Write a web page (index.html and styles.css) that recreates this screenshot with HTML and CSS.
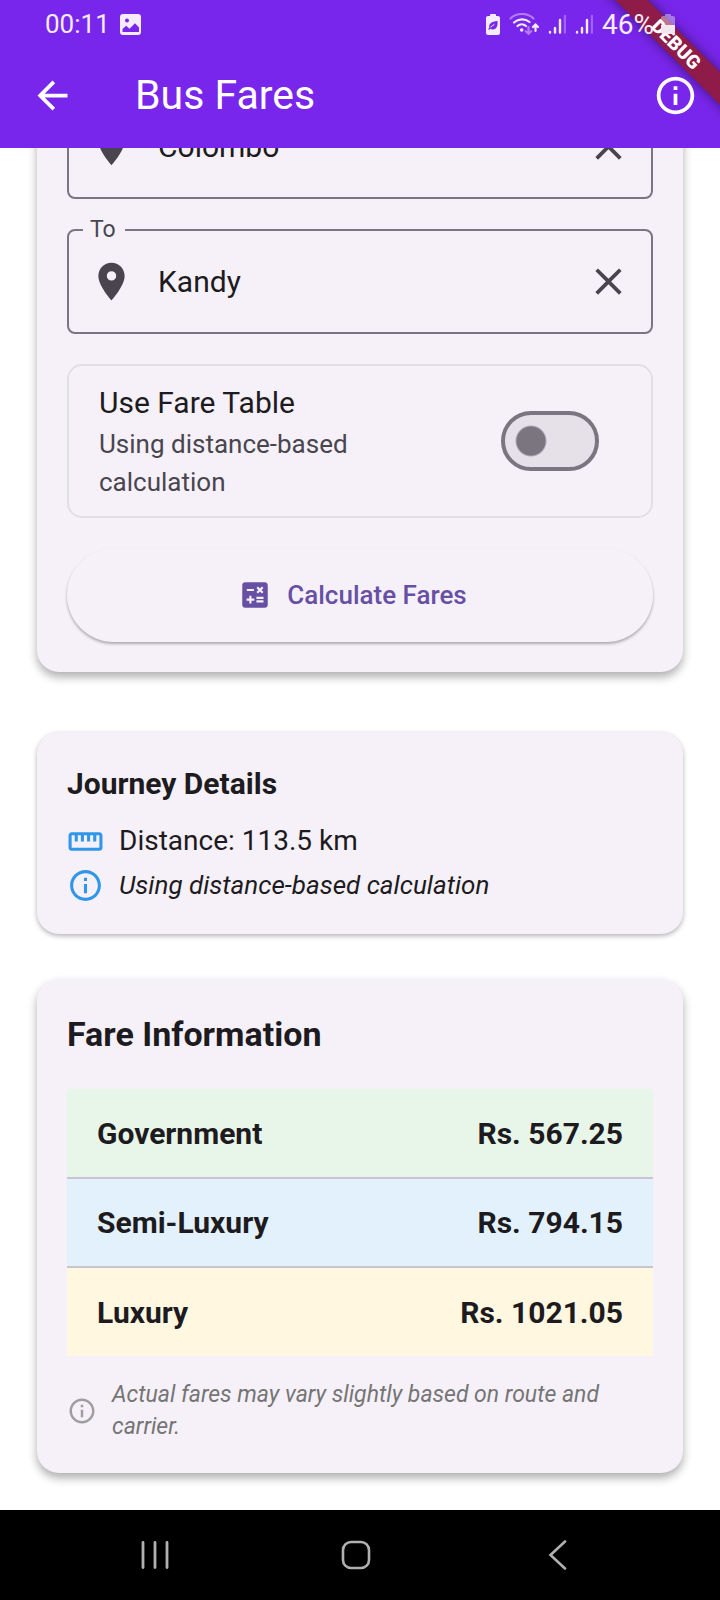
FILE: index.html
```html
<!DOCTYPE html>
<html lang="en">
<head>
<meta charset="utf-8">
<meta name="viewport" content="width=device-width, initial-scale=1">
<title>Bus Fares</title>
<link rel="stylesheet" href="styles.css">
</head>
<body>
<div class="app">
  <header class="header">
    <div class="debug-banner">DEBUG</div>
    <div class="status">
      <span class="status-time">00:11</span>
      <svg class="status-photo" viewBox="0 0 21 21" width="21" height="21"><path fill="#f4ecfe" fill-rule="evenodd" d="M3 0h15a3 3 0 0 1 3 3v15a3 3 0 0 1-3 3H3a3 3 0 0 1-3-3V3a3 3 0 0 1 3-3zM7 4.500a2 2 0 1 0 0 4 2 2 0 0 0 0-4zM2.500 15v3h16.500v-4.500L15 9.300l-5.500 5.500-3.300-3z"/></svg>
      <div class="status-right">
        <svg viewBox="0 0 14 21" width="14" height="21"><path fill="#f4ecfe" d="M4 2V1a1 1 0 0 1 1-1h4a1 1 0 0 1 1 1v1h2a2 2 0 0 1 2 2v15a2 2 0 0 1-2 2H2a2 2 0 0 1-2-2V4a2 2 0 0 1 2-2z"/><path fill="#7826eb" d="M11.500 7c.6 4.500-1 8.500-4.500 8.500-1.200 0-2-.3-2.700-.8L3 16l-.8-1 1.200-1.200C2.300 10 5.500 7.500 11.500 7z"/><path d="M4.500 13.200l4-3" stroke="#f4ecfe" stroke-width="1"/></svg>
        <svg class="status-wifi" viewBox="0 0 30 22" width="30" height="22" fill="none" stroke-width="2.200" stroke-linecap="round"><path stroke="#b27cf7" d="M1.500 5.500C8-.5 18-.5 24.500 5.500M19.500 14v6.500M16.800 18.200l2.700 2.600 2.700-2.600"/><path stroke="#f4ecfe" d="M5 9.500C9.500 5.500 16 5.500 20.500 9M8.500 13c2.500-2.200 6-2.200 8.500 0M26.500 18v-6M24 14l2.500-2.500L29 14"/><circle cx="12.700" cy="17" r="1.800" fill="#f4ecfe"/></svg>
        <svg viewBox="0 0 18 20" width="18" height="20" stroke-width="2.400" stroke-linecap="round"><path stroke="#f4ecfe" d="M2 18v.5M7 14v4.500M12 6v12.500"/><path stroke="#a463f6" d="M17 2v16.500"/></svg>
        <svg viewBox="0 0 18 20" width="18" height="20" stroke-width="2.400" stroke-linecap="round"><path stroke="#f4ecfe" d="M2 18v.5M7 14v4.500M12 6v12.500"/><path stroke="#a463f6" d="M17 2v16.500"/></svg>
        <span class="status-percent">46%</span>
        <svg class="status-battery" viewBox="0 0 14 20" width="14" height="20"><path fill="#fff" fill-opacity=".4" d="M4 2V1a1 1 0 0 1 1-1h4a1 1 0 0 1 1 1v1h2a2 2 0 0 1 2 2v7H0V4a2 2 0 0 1 2-2z"/><path fill="#f4e6ee" d="M0 11h14v7a2 2 0 0 1-2 2H2a2 2 0 0 1-2-2z"/></svg>
      </div>
    </div>
    <div class="appbar">
      <button class="icon-button" aria-label="Back"><svg viewBox="0 0 24 24"><path fill="currentColor" d="M20 11H7.830l5.590-5.590L12 4l-8 8 8 8 1.410-1.410L7.830 13H20z"/></svg></button>
      <h1 class="appbar-title">Bus Fares</h1>
      <button class="icon-button" aria-label="Information"><svg viewBox="0 0 24 24"><path fill="currentColor" d="M11 7h2v2h-2zm0 4h2v6h-2zm1-9C6.480 2 2 6.480 2 12s4.480 10 10 10 10-4.480 10-10S17.520 2 12 2zm0 18c-4.410 0-8-3.590-8-8s3.590-8 8-8 8 3.590 8 8-3.590 8-8 8z"/></svg></button>
    </div>
  </header>

  <main class="scroller">
    <div class="content">
      <form class="card card-raised search">
        <div class="field">
          <svg class="field-icon" viewBox="0 0 24 24"><path fill="currentColor" d="M12 2C8.130 2 5 5.130 5 9c0 5.250 7 13 7 13s7-7.750 7-13c0-3.870-3.130-7-7-7zm0 9.500a2.500 2.500 0 0 1 0-5 2.500 2.500 0 0 1 0 5z"/></svg>
          <input class="field-input" type="text" value="Colombo" aria-label="From">
          <button class="icon-button field-clear" type="button" aria-label="Clear"><svg viewBox="0 0 24 24"><path fill="currentColor" d="M19 6.410L17.590 5 12 10.590 6.410 5 5 6.410 10.590 12 5 17.590 6.410 19 12 13.410 17.590 19 19 17.590 13.410 12z"/></svg></button>
        </div>
        <div class="field">
          <label class="field-label" for="to">To</label>
          <svg class="field-icon" viewBox="0 0 24 24"><path fill="currentColor" d="M12 2C8.130 2 5 5.130 5 9c0 5.250 7 13 7 13s7-7.750 7-13c0-3.870-3.130-7-7-7zm0 9.500a2.500 2.500 0 0 1 0-5 2.500 2.500 0 0 1 0 5z"/></svg>
          <input class="field-input" id="to" type="text" value="Kandy">
          <button class="icon-button field-clear" type="button" aria-label="Clear"><svg viewBox="0 0 24 24"><path fill="currentColor" d="M19 6.410L17.590 5 12 10.590 6.410 5 5 6.410 10.590 12 5 17.590 6.410 19 12 13.410 17.590 19 19 17.590 13.410 12z"/></svg></button>
        </div>
        <label class="option">
          <span class="option-text">
            <span class="option-title">Use Fare Table</span>
            <span class="option-subtitle">Using distance-based calculation</span>
          </span>
          <input class="switch" type="checkbox" role="switch">
        </label>
        <button class="calculate" type="button">
          <svg class="calculate-icon" viewBox="0 0 24 24"><path fill="currentColor" d="M19 3H5c-1.100 0-2 .9-2 2v14c0 1.100.9 2 2 2h14c1.100 0 2-.9 2-2V5c0-1.100-.9-2-2-2zm-5.970 4.060L14.090 6l1.410 1.410L16.910 6l1.060 1.060-1.410 1.410 1.410 1.410-1.060 1.060-1.410-1.400-1.410 1.410-1.060-1.060 1.410-1.410-1.410-1.420zm-6.780.660h5v1.500h-5v-1.500zM11.500 16h-2v2H8v-2H6v-1.500h2v-2h1.500v2h2V16zm6.500 1.250h-5v-1.500h5v1.500zm0-2.500h-5v-1.500h5v1.500z"/></svg>
          Calculate Fares
        </button>
      </form>

      <section class="card journey">
        <h2 class="journey-title">Journey Details</h2>
        <p class="journey-row journey-distance">
          <svg class="journey-icon" viewBox="0 0 24 24"><path fill="currentColor" d="M21 6H3c-1.100 0-2 .9-2 2v8c0 1.100.9 2 2 2h18c1.100 0 2-.9 2-2V8c0-1.100-.9-2-2-2zm0 10H3V8h2v4h2V8h2v4h2V8h2v4h2V8h2v4h2V8h2v8z"/></svg>
          Distance: 113.5 km
        </p>
        <p class="journey-row journey-method">
          <svg class="journey-icon" viewBox="0 0 24 24"><path fill="currentColor" d="M11 7h2v2h-2zm0 4h2v6h-2zm1-9C6.480 2 2 6.480 2 12s4.480 10 10 10 10-4.480 10-10S17.520 2 12 2zm0 18c-4.410 0-8-3.590-8-8s3.590-8 8-8 8 3.590 8 8-3.590 8-8 8z"/></svg>
          Using distance-based calculation
        </p>
      </section>

      <section class="card card-raised">
        <h2 class="fares-title">Fare Information</h2>
        <table class="fares">
          <tbody>
            <tr class="fare fare-government"><th scope="row">Government</th><td>Rs. 567.25</td></tr>
            <tr class="fare fare-semi"><th scope="row">Semi-Luxury</th><td>Rs. 794.15</td></tr>
            <tr class="fare fare-luxury"><th scope="row">Luxury</th><td>Rs. 1021.05</td></tr>
          </tbody>
        </table>
        <div class="note">
          <svg class="note-icon" viewBox="0 0 24 24"><path fill="currentColor" d="M11 7h2v2h-2zm0 4h2v6h-2zm1-9C6.480 2 2 6.480 2 12s4.480 10 10 10 10-4.480 10-10S17.520 2 12 2zm0 18c-4.410 0-8-3.590-8-8s3.590-8 8-8 8 3.590 8 8-3.590 8-8 8z"/></svg>
          <p class="note-text">Actual fares may vary slightly based on route and carrier.</p>
        </div>
      </section>
    </div>
  </main>

  <nav class="navbar">
    <button class="nav-button" aria-label="Recent apps"><svg viewBox="0 0 30 30" width="30" height="30"><path fill="none" stroke="#b0b0b0" stroke-width="2.800" stroke-linecap="round" d="M3 2.500v25M15 2.500v25M27 2.500v25"/></svg></button>
    <button class="nav-button" aria-label="Home"><svg viewBox="0 0 30 30" width="30" height="30"><rect x="2" y="2" width="26" height="26" rx="8" fill="none" stroke="#b0b0b0" stroke-width="2.600"/></svg></button>
    <button class="nav-button" aria-label="Back"><svg viewBox="0 0 30 30" width="30" height="30"><path fill="none" stroke="#b0b0b0" stroke-width="2.600" stroke-linecap="round" d="M23 1.500L8.500 15 23 28.500"/></svg></button>
  </nav>
</div>
</body>
</html>
```
FILE: styles.css
```css
* {
  box-sizing: border-box;
}

body {
  margin: 0;
  background: #fff;
  color: #1d1b20;
  font-family: Roboto, "Noto Sans", sans-serif;
  font-size: 30px;
}

h1,
h2,
p {
  margin: 0;
}

button {
  padding: 0;
  border: 0;
  background: none;
  color: inherit;
  font: inherit;
  cursor: pointer;
}

svg {
  display: block;
  flex: none;
}

.app {
  display: flex;
  flex-direction: column;
  height: 100vh;
}

/* Header */
.header {
  position: relative;
  flex: none;
  overflow: hidden;
  background: #7826eb;
  color: #fff;
}

.debug-banner {
  position: absolute;
  top: 33px;
  right: -76px;
  width: 240px;
  background: #8f1b48;
  box-shadow: 0 0 12px rgba(0, 0, 0, 0.5);
  font-size: 19px;
  font-weight: 900;
  line-height: 23px;
  text-align: center;
  transform: rotate(45deg);
}

.status {
  position: relative;
  display: flex;
  align-items: center;
  height: 48px;
  padding: 0 45px;
  color: #f4ecfe;
}

.status-time {
  font-size: 26px;
}

.status-percent {
  font-size: 28px;
}

.status-photo {
  margin-left: 10px;
}

.status-right {
  display: flex;
  align-items: center;
  gap: 9px;
  margin-left: auto;
}

.status-battery {
  margin-left: -2px;
}

.appbar {
  display: flex;
  align-items: center;
  height: 100px;
  padding: 0 22px 6px 30px;
}

.appbar-title {
  flex: 1;
  padding-left: 60px;
  font-size: 41px;
  font-weight: 400;
}

.icon-button {
  flex: none;
  width: 45px;
  height: 45px;
}

/* Scrolling area, resting at its end */
.scroller {
  display: flex;
  flex: 1;
  flex-direction: column-reverse;
  min-height: 0;
  overflow-y: auto;
  scrollbar-width: none;
}

.content {
  padding: 37px;
}

.card {
  margin-bottom: 45px;
  padding: 30px;
  border-radius: 22px;
  background: #f6f1f9;
  box-shadow: 0 2px 5px rgba(0, 0, 0, 0.3);
}

.card:last-child {
  margin-bottom: 0;
}

.card-raised {
  box-shadow: 0 5px 10px rgba(0, 0, 0, 0.32);
}

/* Search form */
.search {
  display: flex;
  flex-direction: column;
  gap: 30px;
  margin-bottom: 60px;
}

.field {
  position: relative;
  display: flex;
  align-items: center;
  gap: 24px;
  height: 105px;
  padding: 0 20px;
  border: 2px solid #7a757f;
  border-radius: 8px;
  color: #49454f;
}

.field-label {
  position: absolute;
  top: -14px;
  left: 14px;
  padding: 0 9px 0 7px;
  background: #f6f1f9;
  font-size: 23px;
  line-height: 26px;
}

.field-icon {
  width: 45px;
  height: 45px;
}

.field-input {
  flex: 1;
  min-width: 0;
  padding: 0;
  border: 0;
  background: none;
  color: #1d1b20;
  font: inherit;
  outline: none;
}

.option {
  display: flex;
  align-items: center;
  gap: 60px;
  min-height: 154px;
  padding: 14px 52px 14px 30px;
  border: 2px solid #e0dfe2;
  border-radius: 15px;
}

.option-text {
  flex: 1;
}

.option-title,
.option-subtitle {
  display: block;
}

.option-title {
  line-height: 44px;
}

.option-subtitle {
  color: #49454f;
  font-size: 26px;
  line-height: 38px;
}

.switch {
  flex: none;
  width: 98px;
  height: 60px;
  margin: 0;
  border: 4px solid #7a757f;
  border-radius: 30px;
  background: radial-gradient(circle at 26px 26px, #7a757f 14px, #e6e0e9 16px);
  appearance: none;
}

.switch:checked {
  border-color: #6750a4;
  background: radial-gradient(circle at 64px 26px, #fff 20px, #6750a4 22px);
}

.calculate {
  display: flex;
  align-items: center;
  justify-content: center;
  gap: 15px;
  height: 94px;
  padding: 0 45px 0 30px;
  border-radius: 47px;
  background: #f6f1f9;
  box-shadow: 0 2px 3px rgba(0, 0, 0, 0.3);
  color: #6750a4;
  font-size: 26px;
  font-weight: 500;
}

.calculate-icon {
  width: 34px;
  height: 34px;
}

/* Journey details */
.journey-title {
  margin-bottom: 15px;
  font-size: 30px;
  line-height: 43px;
}

.journey-row {
  display: flex;
  align-items: center;
  gap: 15px;
}

.journey-distance {
  margin-bottom: 4px;
  font-size: 28px;
  line-height: 42px;
}

.journey-method {
  font-size: 26px;
  font-style: italic;
  line-height: 38px;
}

.journey-icon {
  width: 37px;
  height: 37px;
  color: #2f96ea;
}

/* Fares */
.fares-title {
  margin-bottom: 30px;
  font-size: 34px;
  line-height: 50px;
}

.fares {
  width: 100%;
  border-collapse: collapse;
  font-weight: 700;
}

.fare th,
.fare td {
  height: 89px;
  padding: 0 30px;
}

.fare th {
  text-align: left;
}

.fare td {
  text-align: right;
}

.fare + .fare {
  border-top: 2px solid #c9c4d0;
}

.fare-government {
  background: #e8f5e9;
}

.fare-semi {
  background: #e3f1fd;
}

.fare-luxury {
  background: #fff7e0;
}

.note {
  display: flex;
  align-items: center;
  gap: 15px;
  margin-top: 23px;
}

.note-icon {
  width: 30px;
  height: 30px;
  color: #9e9e9e;
}

.note-text {
  padding-right: 30px;
  color: #757575;
  font-size: 23px;
  font-style: italic;
  line-height: 32px;
}

/* System navigation */
.navbar {
  display: flex;
  flex: none;
  align-items: center;
  justify-content: center;
  gap: 121px;
  height: 90px;
  padding-right: 8px;
  background: #000;
}

.nav-button {
  display: flex;
  align-items: center;
  justify-content: center;
  width: 80px;
  height: 80px;
}
```
